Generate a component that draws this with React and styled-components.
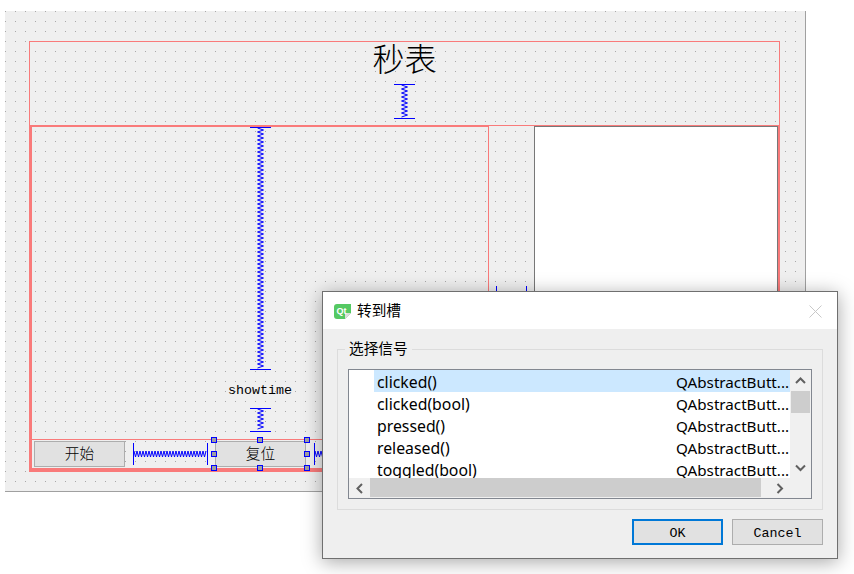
import { createGlobalStyle, styled } from 'styled-components';

const UI_FONT = '"Noto Sans", "Noto Sans CJK SC", sans-serif';
const CJK_FONT = '"Noto Sans CJK SC", sans-serif';
const MONO_FONT = '"Liberation Mono", "Noto Sans CJK SC", monospace';
const RED = '#f97a7a';

const GlobalStyle = createGlobalStyle`
  html, body {
    margin: 0;
    background: #fff;
    overflow: hidden;
  }
`;

const Page = styled.div`
  position: relative;
  width: 854px;
  height: 574px;
  padding: 11px 0 0 5px;
  box-sizing: border-box;
  overflow: hidden;
`;

const Canvas = styled.div`
  width: 801px;
  height: 481px;
  box-sizing: border-box;
  padding: 30px 0 0 24px;
  background-color: #efefef;
  background-image: conic-gradient(at 1px 1px, transparent 75%, #a8a8a8 0);
  background-size: 10px 10px;
  border-right: 1px solid #a0a0a0;
  border-bottom: 1px solid #a0a0a0;
`;

const Frame = styled.div`
  width: 751px;
  height: 431px;
  display: flex;
  flex-direction: column;
`;

const TitleSection = styled.div`
  height: 84px;
  box-sizing: border-box;
  border: 1px solid ${RED};
  border-bottom: 0;
  display: flex;
  flex-direction: column;
  align-items: center;
`;

const Title = styled.div`
  height: 42px;
  line-height: 31px;
  font-family: ${CJK_FONT};
  font-size: 32px;
  font-weight: 300;
  color: #000;
`;

const Body = styled.div`
  flex: 1;
  display: flex;
  min-height: 0;
  border-left: 3px solid ${RED};
  border-bottom: 4px solid ${RED};
`;

const LeftPane = styled.div`
  width: 457px;
  box-sizing: border-box;
  display: flex;
  flex-direction: column;
  align-items: center;
  border-top: 2px solid ${RED};
  border-right: 1px solid ${RED};
`;

const ShowTime = styled.div`
  height: 38px;
  line-height: 42px;
  font-family: ${MONO_FONT};
  font-size: 13.33px;
  color: #000;
`;

const ButtonRow = styled.div`
  align-self: stretch;
  margin-top: 7px;
  height: 29px;
  box-sizing: border-box;
  padding: 1px 0 0 2px;
  display: flex;
  border-top: 1px solid ${RED};
`;

const FormButton = styled.div`
  position: relative;
  flex: none;
  width: 91px;
  height: 26px;
  box-sizing: border-box;
  border: 1px solid #adadad;
  background: #e1e1e1;
  display: flex;
  align-items: center;
  justify-content: center;
  line-height: 20px;
  padding-bottom: 3px;
  font-family: ${CJK_FONT};
  font-size: 14.67px;
  font-weight: 300;
  color: #000;
`;

const Handle = styled.span`
  position: absolute;
  left: ${(p) => p.$left}px;
  top: ${(p) => p.$top}px;
  width: 6px;
  height: 6px;
  box-sizing: border-box;
  border: 1px solid #0000ff;
  background: #a0a0a0;
`;

const RowSpacer = styled.div`
  flex: none;
  margin: 2px 7px 0 8px;
  height: 22px;
`;

const RightPane = styled.div`
  flex: 1;
  min-width: 0;
  display: flex;
  align-items: center;
  border-top: 1px solid ${RED};
  border-right: 2px solid ${RED};
`;

const MiddleSpacer = styled.div`
  flex: none;
  margin: 0 7px;
  height: 22px;
`;

const WhiteBox = styled.div`
  flex: 1;
  align-self: stretch;
  box-sizing: border-box;
  background: #fff;
  border: 1px solid #777;
`;

const Dialog = styled.div`
  position: absolute;
  left: 322px;
  top: 291px;
  width: 516px;
  height: 268px;
  box-sizing: border-box;
  display: flex;
  flex-direction: column;
  background: #efefef;
  border: 1px solid #6f6f6f;
  box-shadow: 0 3px 18px rgba(0, 0, 0, 0.35);
`;

const DialogTitleBar = styled.div`
  height: 37px;
  flex: none;
  background: #fff;
  display: flex;
  align-items: center;
  padding: 0 15px 0 11px;
  gap: 5px;
`;

const DialogTitle = styled.div`
  flex: 1;
  line-height: 20px;
  padding-bottom: 2px;
  font-family: ${CJK_FONT};
  font-size: 14.67px;
  color: #000;
`;

const Group = styled.div`
  position: relative;
  flex: none;
  margin: 20px 14px 0;
  height: 161px;
  box-sizing: border-box;
  border: 1px solid #dcdcdc;
  padding: 19px 10px 0;
`;

const GroupLabel = styled.span`
  position: absolute;
  left: 7px;
  top: -12px;
  padding: 0 4px;
  background: #efefef;
  line-height: 20px;
  font-family: ${CJK_FONT};
  font-size: 14.67px;
  color: #000;
`;

const SignalList = styled.div`
  height: 130px;
  box-sizing: border-box;
  border: 1px solid #828790;
  display: grid;
  grid-template-columns: 1fr 21px;
  grid-template-rows: 108px 20px;
  background: #f0f0f0;
`;

const Rows = styled.div`
  background: #fff;
  padding-left: 25px;
  overflow: hidden;
`;

const Row = styled.div`
  display: flex;
  height: 22px;
  line-height: 24px;
  font-family: ${UI_FONT};
  color: #000;
  background: ${(p) => (p.$selected ? '#cce8ff' : 'transparent')};
`;

const SignalName = styled.div`
  width: 302px;
  padding-left: 3px;
  box-sizing: border-box;
  font-size: 15.8px;
`;

const SignalOwner = styled.div`
  flex: 1;
  height: 24px;
  font-size: 15.2px;
  white-space: nowrap;
  overflow: hidden;
`;

const VScroll = styled.div`
  display: flex;
  flex-direction: column;
  align-items: stretch;
`;

const HScroll = styled.div`
  display: flex;
`;

const ScrollButton = styled.div`
  flex: none;
  width: 21px;
  height: ${(p) => (p.$vertical ? '21px' : '20px')};
  display: flex;
  align-items: center;
  justify-content: center;
`;

const VThumb = styled.div`
  height: 22px;
  margin: 0 1px;
  background: #cdcdcd;
`;

const HThumb = styled.div`
  width: 391px;
  height: 19px;
  background: #cdcdcd;
`;

const Fill = styled.div`
  flex: 1;
`;

const DialogFooter = styled.div`
  display: flex;
  justify-content: flex-end;
  gap: 9px;
  padding: 9px 14px 0 0;
`;

const DialogButton = styled.div`
  width: 91px;
  height: 26px;
  box-sizing: border-box;
  border: ${(p) => (p.$primary ? '2px solid #0078d7' : '1px solid #adadad')};
  background: #e1e1e1;
  display: flex;
  align-items: center;
  justify-content: center;
  padding-top: 2px;
  font-family: ${MONO_FONT};
  font-size: 13.33px;
  color: #000;
`;

// Qt Designer spacer, caps on both ends and a coil between
const Spring = ({ vertical, length }) => {
  let coil = '';
  const step = vertical ? 4 : 3;
  for (let i = 1; i < length - step; i += step) {
    coil += vertical
      ? `M7.5 ${i}L13.5 ${i + step / 2}L7.5 ${i + step}`
      : `M${i} 8L${i + step / 2} 14L${i + step} 8`;
  }
  const w = vertical ? 21 : length;
  const h = vertical ? length : 22;
  const caps = vertical
    ? `M0 .5H21M0 ${length - 0.5}H21`
    : `M.5 0V22M${length - 0.5} 0V22`;
  return (
    <svg width={w} height={h} viewBox={`0 0 ${w} ${h}`} style={{ display: 'block', flex: 'none' }}>
      <path d={coil} fill="none" stroke="#0000ff" strokeWidth="1" />
      <path d={caps} fill="none" stroke="#0000ff" strokeWidth="1" />
    </svg>
  );
};

const QtIcon = () => (
  <svg width="18" height="16" viewBox="0 0 18 16" style={{ flex: 'none', marginTop: 2 }}>
    <path d="M3 0H17V9L11 15H3Q0 15 0 12V3Q0 0 3 0Z" fill="#55c963" />
    <path d="M11 15L17 9H12Q11 9 11 10Z" fill="#dcdcdc" />
    <text x="2.5" y="10" fontFamily="Liberation Sans, sans-serif" fontSize="9" fontWeight="700" fill="#fff">Qt</text>
  </svg>
);

const CloseIcon = () => (
  <svg width="13" height="13" viewBox="0 0 13 13" style={{ flex: 'none', marginTop: 2 }}>
    <path d="M.5 .5L12.5 12.5M12.5 .5L.5 12.5" stroke="#c8c8c8" strokeWidth="1" fill="none" />
  </svg>
);

const CHEVRONS = {
  up: 'M1 6L5.5 1.5L10 6',
  down: 'M1 1.5L5.5 6L10 1.5',
  left: 'M6 1L1.5 5.5L6 10',
  right: 'M1.5 1L6 5.5L1.5 10',
};

const Chevron = ({ dir }) => {
  const flat = dir === 'up' || dir === 'down';
  return (
    <svg width={flat ? 11 : 8} height={flat ? 8 : 11} style={{ display: 'block' }}>
      <path d={CHEVRONS[dir]} fill="none" stroke="#606060" strokeWidth="2" />
    </svg>
  );
};

const HANDLES = [
  [-4, -4], [42, -4], [89, -4],
  [-4, 10], [89, 10],
  [-4, 24], [42, 24], [89, 24],
];

const SIGNALS = ['clicked()', 'clicked(bool)', 'pressed()', 'released()', 'toggled(bool)'];

const App = () => {
  return (
    <Page>
      <GlobalStyle />
      <Canvas>
        <Frame>
          <TitleSection>
            <Title>秒表</Title>
            <Spring vertical length={35} />
          </TitleSection>
          <Body>
            <LeftPane>
              <Spring vertical length={243} />
              <ShowTime>showtime</ShowTime>
              <Spring vertical length={24} />
              <ButtonRow>
                <FormButton>开始</FormButton>
                <RowSpacer><Spring length={75} /></RowSpacer>
                <FormButton>
                  复位
                  {HANDLES.map(([left, top]) => (
                    <Handle key={`${left}-${top}`} $left={left - 1} $top={top - 1} />
                  ))}
                </FormButton>
                <RowSpacer><Spring length={75} /></RowSpacer>
                <FormButton />
              </ButtonRow>
            </LeftPane>
            <RightPane>
              <MiddleSpacer><Spring length={31} /></MiddleSpacer>
              <WhiteBox />
            </RightPane>
          </Body>
        </Frame>
      </Canvas>

      <Dialog>
        <DialogTitleBar>
          <QtIcon />
          <DialogTitle>转到槽</DialogTitle>
          <CloseIcon />
        </DialogTitleBar>
        <Group>
          <GroupLabel>选择信号</GroupLabel>
          <SignalList>
            <Rows>
              {SIGNALS.map((name, i) => (
                <Row key={name} $selected={i === 0}>
                  <SignalName>{name}</SignalName>
                  <SignalOwner>QAbstractButt...</SignalOwner>
                </Row>
              ))}
            </Rows>
            <VScroll>
              <ScrollButton $vertical><Chevron dir="up" /></ScrollButton>
              <VThumb />
              <Fill />
              <ScrollButton $vertical><Chevron dir="down" /></ScrollButton>
            </VScroll>
            <HScroll>
              <ScrollButton><Chevron dir="left" /></ScrollButton>
              <HThumb />
              <Fill />
              <ScrollButton><Chevron dir="right" /></ScrollButton>
            </HScroll>
          </SignalList>
        </Group>
        <DialogFooter>
          <DialogButton $primary>OK</DialogButton>
          <DialogButton>Cancel</DialogButton>
        </DialogFooter>
      </Dialog>
    </Page>
  );
};

export default App;
